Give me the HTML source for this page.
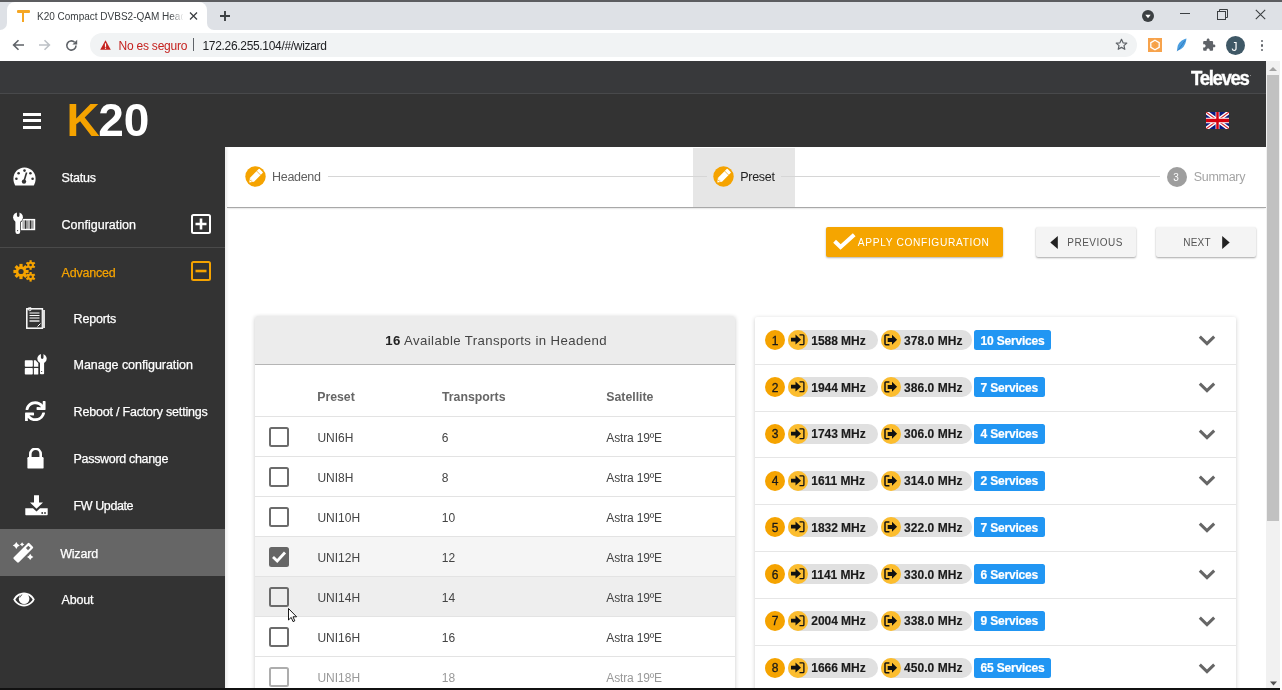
<!DOCTYPE html>
<html><head><meta charset="utf-8">
<style>
*{box-sizing:border-box;margin:0;padding:0}
html,body{width:1282px;height:690px;overflow:hidden;background:#fff;font-family:"Liberation Sans",sans-serif;position:relative}
.a{position:absolute}
.t{position:absolute;white-space:nowrap;line-height:1}
svg{display:block}
svg.a{position:absolute}
</style></head><body>
<div style="position:absolute;left:0;top:0;width:1282px;height:690px;will-change:transform">

<div class="a" style="left:0;top:0;width:1282px;height:2px;background:#5c5d60"></div>
<div class="a" style="left:0;top:2px;width:1282px;height:28px;background:#dee1e6"></div>
<div class="a" style="left:7px;top:2px;width:200px;height:28px;background:#fff;border-radius:8px 8px 0 0"></div>
<div class="a" style="left:-1px;top:22px;width:8px;height:8px;background:#fff"></div>
<div class="a" style="left:-1px;top:14px;width:8px;height:16px;background:#dee1e6;border-radius:0 0 7px 0"></div>
<div class="a" style="left:207px;top:22px;width:8px;height:8px;background:#fff"></div>
<div class="a" style="left:207px;top:14px;width:8px;height:16px;background:#dee1e6;border-radius:0 0 0 7px"></div>
<div class="a" style="left:0;top:30px;width:1282px;height:31px;background:#fff"></div>
<!-- favicon T -->
<div class="a" style="left:17px;top:10px;width:12.5px;height:2.6px;background:#f5a623;border-radius:1px"></div>
<div class="a" style="left:22px;top:11px;width:2.4px;height:11px;background:#f5a623"></div>
<div class="t" style="left:37.0px;top:12.00px;font-size:10px;color:#3c4043;font-weight:400;letter-spacing:0px;width:146px;overflow:hidden;">K20 Compact DVBS2-QAM Heade</div>
<div class="a" style="left:170px;top:8px;width:14px;height:16px;background:linear-gradient(90deg,rgba(255,255,255,0),#fff)"></div>
<svg class="a" style="left:189px;top:12px" width="9" height="8" viewBox="0 0 9 8"><path d="M1 0.5 L8 7.5 M8 0.5 L1 7.5" stroke="#3c4043" stroke-width="1.3"/></svg>
<svg class="a" style="left:219px;top:10px" width="12" height="12" viewBox="0 0 12 12"><path d="M6 1 V11 M1 6 H11" stroke="#3c4043" stroke-width="1.9"/></svg>
<svg class="a" style="left:12px;top:39px" width="13" height="12" viewBox="0 0 13 12"><path d="M12 6 H2 M6.5 1.2 L1.6 6 L6.5 10.8" fill="none" stroke="#5f6368" stroke-width="1.6"/></svg>
<svg class="a" style="left:38px;top:39px" width="13" height="12" viewBox="0 0 13 12"><path d="M1 6 H11 M6.5 1.2 L11.4 6 L6.5 10.8" fill="none" stroke="#bdc1c6" stroke-width="1.6"/></svg>
<svg class="a" style="left:65px;top:39px" width="13" height="13" viewBox="0 0 13 13"><path d="M11 6.5 A4.6 4.6 0 1 1 9.6 3.2" fill="none" stroke="#5f6368" stroke-width="1.6"/><path d="M12.2 0.8 V5.6 H7.4 Z" fill="#5f6368"/></svg>
<div class="a" style="left:90px;top:33px;width:1047px;height:24px;background:#f1f3f4;border-radius:12px"></div>
<svg class="a" style="left:100px;top:40px" width="11" height="10" viewBox="0 0 11 10"><path d="M5.5 0.3 L10.8 9.7 H0.2 Z" fill="#c5221f"/><rect x="4.9" y="3.3" width="1.2" height="3.6" fill="#fff"/><rect x="4.9" y="7.6" width="1.2" height="1.2" fill="#fff"/></svg>
<div class="t" style="left:118.5px;top:40.30px;font-size:12px;color:#c5221f;font-weight:400;letter-spacing:-0.22px;">No es seguro</div>
<div class="a" style="left:193px;top:38px;width:1px;height:13px;background:#5f6368"></div>
<div class="t" style="left:202.5px;top:40.30px;font-size:12px;color:#202124;font-weight:400;letter-spacing:-0.32px;">172.26.255.104/#/wizard</div>
<svg class="a" style="left:1115px;top:38px" width="13" height="13" viewBox="0 0 24 24"><path d="M12 2.5 L14.9 8.9 L21.8 9.5 L16.6 14.1 L18.1 20.9 L12 17.3 L5.9 20.9 L7.4 14.1 L2.2 9.5 L9.1 8.9 Z" fill="none" stroke="#5f6368" stroke-width="2.2" stroke-linejoin="round"/></svg>
<div class="a" style="left:1148px;top:38px;width:14px;height:14px;background:#f7a34c"></div>
<svg class="a" style="left:1148px;top:38px" width="14" height="14" viewBox="0 0 14 14"><path d="M7 2.2 L11.2 4.6 V9.4 L7 11.8 L2.8 9.4 V4.6 Z" fill="none" stroke="#fff" stroke-width="1.3"/><path d="M6 5 L8.2 7 L6.2 9" fill="none" stroke="#f39c3b" stroke-width="0.9"/></svg>
<svg class="a" style="left:1176px;top:38px" width="11" height="14" viewBox="0 0 11 14"><path d="M10.5 0.5 C6 1.5 2 5 1.5 9 L0.8 13.5 L2.5 12 C6 11.5 9.5 8 10.5 0.5 Z" fill="#4a9ee0"/><path d="M9 2.5 L2 12.5" stroke="#2a6fb0" stroke-width="0.7"/></svg>
<svg class="a" style="left:1202px;top:38px" width="14" height="14" viewBox="0 0 24 24"><path d="M20.5 11H19V7c0-1.1-.9-2-2-2h-4V3.5C13 2.12 11.88 1 10.5 1S8 2.12 8 3.5V5H4c-1.1 0-1.99.9-1.99 2v3.8H3.5c1.49 0 2.7 1.21 2.7 2.7s-1.21 2.7-2.7 2.7H2V20c0 1.1.9 2 2 2h3.8v-1.5c0-1.49 1.21-2.7 2.7-2.7 1.49 0 2.7 1.21 2.7 2.7V22H17c1.1 0 2-.9 2-2v-4h1.5c1.38 0 2.5-1.12 2.5-2.5S21.88 11 20.5 11z" fill="#5f6368"/></svg>
<div class="a" style="left:1226px;top:36px;width:19px;height:19px;border-radius:50%;background:#3f5866"></div>
<div class="t" style="left:1231.5px;top:41.20px;font-size:12px;color:#fff;font-weight:400;letter-spacing:0px;">J</div>
<div class="a" style="left:1260.5px;top:40px;width:2.4px;height:2.4px;border-radius:50%;background:#5f6368"></div>
<div class="a" style="left:1260.5px;top:44.3px;width:2.4px;height:2.4px;border-radius:50%;background:#5f6368"></div>
<div class="a" style="left:1260.5px;top:48.6px;width:2.4px;height:2.4px;border-radius:50%;background:#5f6368"></div>
<svg class="a" style="left:1142px;top:10px" width="12" height="12" viewBox="0 0 12 12"><circle cx="6" cy="6" r="6" fill="#3c4043"/><path d="M3.3 4.8 H8.7 L6 8.2 Z" fill="#fff"/></svg>
<div class="a" style="left:1180px;top:13px;width:10px;height:1px;background:#3c4043"></div>
<svg class="a" style="left:1217px;top:9px" width="11" height="11" viewBox="0 0 11 11"><rect x="0.5" y="2.5" width="8" height="8" fill="none" stroke="#3c4043" stroke-width="1"/><path d="M2.5 2.5 V0.5 H10.5 V8.5 H8.5" fill="none" stroke="#3c4043" stroke-width="1"/></svg>
<svg class="a" style="left:1255px;top:9px" width="11" height="11" viewBox="0 0 11 11"><path d="M0.8 0.8 L10.2 10.2 M10.2 0.8 L0.8 10.2" stroke="#3c4043" stroke-width="1.1"/></svg>

<div class="a" style="left:0;top:61px;width:1266px;height:32px;background:#38393b"></div>
<div class="a" style="left:0;top:93px;width:1266px;height:1px;background:#48494b"></div>
<div class="a" style="left:0;top:94px;width:1266px;height:53px;background:#333"></div>
<div class="a" style="left:0;top:147px;width:225px;height:541px;background:#333"></div>
<!-- hamburger -->
<div class="a" style="left:23px;top:112.5px;width:18px;height:3px;background:#fff"></div>
<div class="a" style="left:23px;top:119px;width:18px;height:3px;background:#fff"></div>
<div class="a" style="left:23px;top:125.5px;width:18px;height:3px;background:#fff"></div>
<div class="t" style="left:66.6px;top:97.40px;font-size:46px;color:#fff;font-weight:700;letter-spacing:0px;"><span style="color:#f5a300;letter-spacing:-1.5px">K</span><span style="letter-spacing:-0.2px">2</span>0</div>
<div class="t" style="left:1190.6px;top:67.50px;font-size:20px;color:#fff;font-weight:700;letter-spacing:-1.45px;transform:scaleX(0.93);transform-origin:left;-webkit-text-stroke:0.35px #fff;">Televes</div>
<div class="a" style="left:1249.5px;top:74.5px;width:1.8px;height:1.8px;border-radius:50%;background:#aaa"></div>
<svg class="a" style="left:1206px;top:112px" width="23" height="17" viewBox="0 0 60 30" preserveAspectRatio="none">
<rect width="60" height="30" fill="#0a1a80"/>
<path d="M0,0 L60,30 M60,0 L0,30" stroke="#fff" stroke-width="7.5"/>
<path d="M0,0 L60,30 M60,0 L0,30" stroke="#d4202a" stroke-width="2"/>
<path d="M30,0 V30 M0,15 H60" stroke="#fff" stroke-width="10"/>
<path d="M30,0 V30 M0,15 H60" stroke="#d40010" stroke-width="6.5"/>
</svg>
<div class="a" style="left:0;top:247px;width:225px;height:1px;background:#4a4a4a"></div>
<div class="a" style="left:0;top:529px;width:225px;height:47px;background:#666"></div>
<div class="t" style="left:61.6px;top:172.28px;font-size:12.5px;color:#fff;font-weight:400;letter-spacing:-0.2px;-webkit-text-stroke:0.25px #fff;">Status</div>
<div class="t" style="left:61.6px;top:219.08px;font-size:12.5px;color:#fff;font-weight:400;letter-spacing:0.0px;-webkit-text-stroke:0.25px #fff;">Configuration</div>
<div class="t" style="left:61.6px;top:266.57px;font-size:12.5px;color:#f5a300;font-weight:400;letter-spacing:-0.2px;-webkit-text-stroke:0.25px #f5a300;">Advanced</div>
<div class="t" style="left:73.6px;top:313.07px;font-size:12.5px;color:#fff;font-weight:400;letter-spacing:-0.2px;-webkit-text-stroke:0.25px #fff;">Reports</div>
<div class="t" style="left:73.6px;top:359.47px;font-size:12.5px;color:#fff;font-weight:400;letter-spacing:-0.05px;-webkit-text-stroke:0.25px #fff;">Manage configuration</div>
<div class="t" style="left:73.6px;top:406.27px;font-size:12.5px;color:#fff;font-weight:400;letter-spacing:-0.2px;-webkit-text-stroke:0.25px #fff;">Reboot / Factory settings</div>
<div class="t" style="left:73.6px;top:453.07px;font-size:12.5px;color:#fff;font-weight:400;letter-spacing:-0.33px;-webkit-text-stroke:0.25px #fff;">Password change</div>
<div class="t" style="left:73.6px;top:499.77px;font-size:12.5px;color:#fff;font-weight:400;letter-spacing:-0.42px;-webkit-text-stroke:0.25px #fff;">FW Update</div>
<div class="t" style="left:60.2px;top:547.67px;font-size:12.5px;color:#fff;font-weight:400;letter-spacing:-0.2px;-webkit-text-stroke:0.25px #fff;">Wizard</div>
<div class="t" style="left:61.6px;top:594.27px;font-size:12.5px;color:#fff;font-weight:400;letter-spacing:-0.2px;-webkit-text-stroke:0.25px #fff;">About</div>
<svg class="a" style="left:12.5px;top:167px" width="23" height="19" viewBox="0 0 23 19">
<path d="M11.5 0.6 C5.2 0.6 0.4 5.6 0.4 11.8 C0.4 14.2 1 16.4 2.2 18.4 H20.8 C22 16.4 22.6 14.2 22.6 11.8 C22.6 5.6 17.8 0.6 11.5 0.6 Z" fill="#fff"/>
<circle cx="11.5" cy="3.6" r="1.3" fill="#333"/><circle cx="5.6" cy="6.2" r="1.3" fill="#333"/><circle cx="17.4" cy="6.2" r="1.3" fill="#333"/>
<circle cx="3.4" cy="11.8" r="1.3" fill="#333"/><circle cx="19.6" cy="11.8" r="1.3" fill="#333"/>
<path d="M13.6 5.5 L11.3 13.3" stroke="#333" stroke-width="1.6"/><circle cx="11" cy="14.6" r="2.2" fill="#333"/>
</svg>
<svg class="a" style="left:8px;top:208px" width="32" height="30" viewBox="0 0 32 30">
<rect x="13" y="10.9" width="14.2" height="11.3" fill="#fff"/>
<rect x="14.5" y="12.4" width="11.2" height="8.3" fill="#9a9a9a"/>
<path d="M16 12.4 V20.7 M21 12.4 V20.7" stroke="#d0d0d0" stroke-width="1"/>
<path d="M17.5 12.4 V20.7 M22.5 12.4 V20.7" stroke="#333" stroke-width="1.1"/>
<circle cx="10" cy="9.3" r="5.6" fill="#333"/>
<rect x="6.9" y="11" width="5.8" height="15.6" rx="2.6" fill="#333"/>
<circle cx="10" cy="9.3" r="4.9" fill="#fff"/>
<rect x="7.4" y="11" width="4.8" height="15" rx="2.2" fill="#fff"/>
<path d="M8.9 3 V7.6 A1.3 1.3 0 0 0 11.5 7.6 V3 Z" fill="#333"/>
<circle cx="9.6" cy="22.6" r="0.6" fill="#333"/>
</svg>
<svg class="a" style="left:13px;top:260px" width="23" height="22" viewBox="0 0 23 22">
<g fill="#f5a300">
<circle cx="8" cy="11.5" r="5.2"/>
<g transform="translate(8 11.5)"><rect x="-1.6" y="-7.6" width="3.2" height="15.2"/><rect x="-1.6" y="-7.6" width="3.2" height="15.2" transform="rotate(45)"/><rect x="-1.6" y="-7.6" width="3.2" height="15.2" transform="rotate(90)"/><rect x="-1.6" y="-7.6" width="3.2" height="15.2" transform="rotate(135)"/></g>
<circle cx="17.6" cy="5" r="3.3"/>
<g transform="translate(17.6 5)"><rect x="-1.1" y="-4.8" width="2.2" height="9.6"/><rect x="-1.1" y="-4.8" width="2.2" height="9.6" transform="rotate(60)"/><rect x="-1.1" y="-4.8" width="2.2" height="9.6" transform="rotate(120)"/></g>
<circle cx="17.6" cy="16.8" r="3.3"/>
<g transform="translate(17.6 16.8)"><rect x="-1.1" y="-4.8" width="2.2" height="9.6"/><rect x="-1.1" y="-4.8" width="2.2" height="9.6" transform="rotate(60)"/><rect x="-1.1" y="-4.8" width="2.2" height="9.6" transform="rotate(120)"/></g>
</g>
<circle cx="8" cy="11.5" r="2.6" fill="#333"/><circle cx="17.6" cy="5" r="1.3" fill="#333"/><circle cx="17.6" cy="16.8" r="1.3" fill="#333"/>
</svg>
<svg class="a" style="left:191px;top:213.5px" width="20" height="20" viewBox="0 0 20 20"><rect x="1" y="1" width="18" height="18" rx="1.5" fill="none" stroke="#fff" stroke-width="2"/><path d="M10 4.5 V15.5 M4.5 10 H15.5" stroke="#fff" stroke-width="2.6"/></svg>
<svg class="a" style="left:191px;top:261px" width="20" height="20" viewBox="0 0 20 20"><rect x="1" y="1" width="18" height="18" rx="1.5" fill="none" stroke="#f5a300" stroke-width="2"/><path d="M4.5 10 H15.5" stroke="#f5a300" stroke-width="2.6"/></svg>
<svg class="a" style="left:26px;top:307px" width="20" height="22" viewBox="0 0 20 22">
<rect x="0.8" y="1.8" width="15.6" height="19.4" fill="none" stroke="#fff" stroke-width="1.5"/>
<rect x="16.4" y="3" width="2.6" height="18" fill="#ddd"/>
<path d="M3.5 6 H13.5 M3.5 8.5 H13.5 M3.5 11 H13.5" stroke="#fff" stroke-width="1"/>
<rect x="3.5" y="13" width="10" height="2" fill="#bbb"/>
<rect x="2.6" y="0.2" width="2.4" height="3.5" rx="1" fill="none" stroke="#fff" stroke-width="0.9"/>
<path d="M11.5 19.5 L14.5 16.5" stroke="#fff" stroke-width="1"/>
</svg>
<svg class="a" style="left:20px;top:350px" width="32" height="30" viewBox="0 0 32 30">
<g fill="#fff">
<rect x="4.8" y="10.2" width="8" height="6.6" rx="0.8"/><rect x="4.8" y="18" width="8" height="6.6" rx="0.8"/>
<path d="M13.9 10.2 H15.6 L18.3 13 V16.8 H13.9 Z"/><rect x="13.9" y="18" width="4.4" height="6.6" rx="0.6"/>
</g>
<circle cx="22" cy="8.7" r="5.5" fill="#333"/>
<rect x="19.5" y="11" width="5.1" height="14" rx="1" fill="#333"/>
<circle cx="22" cy="8.7" r="4.7" fill="#fff"/>
<rect x="20" y="11" width="4.1" height="13.3" rx="0.8" fill="#fff"/>
<path d="M20.9 3 V7.6 A1.3 1.3 0 0 0 23.5 7.6 V3 Z" fill="#333"/>
<rect x="21" y="21.2" width="1.2" height="0.8" fill="#333"/>
</svg>
<svg class="a" style="left:25.4px;top:400.8px" width="20.6" height="20.5" viewBox="0 0 512 512"><path fill="#fff" d="M440.65 12.57l4 82.77A247.16 247.16 0 0 0 255.83 8C134.73 8 33.91 94.92 12.29 209.82A12 12 0 0 0 24.09 224h49.05a12 12 0 0 0 11.67-9.26 175.91 175.91 0 0 1 317-56.94l-101.46-4.86a12 12 0 0 0-12.57 12v47.41a12 12 0 0 0 12 12H500a12 12 0 0 0 12-12V12a12 12 0 0 0-12-12h-47.37a12 12 0 0 0-11.98 12.57zM255.83 432a175.61 175.61 0 0 1-146-77.8l101.8 4.87a12 12 0 0 0 12.57-12v-47.4a12 12 0 0 0-12-12H12a12 12 0 0 0-12 12V500a12 12 0 0 0 12 12h47.35a12 12 0 0 0 12-12.6l-4.15-82.57A247.17 247.17 0 0 0 255.83 504c121.11 0 221.93-86.92 243.55-201.82a12 12 0 0 0-11.8-14.18h-49.05a12 12 0 0 0-11.67 9.26A175.86 175.86 0 0 1 255.83 432z"/></svg>
<svg class="a" style="left:27px;top:447.5px" width="17" height="21" viewBox="0 0 17 21"><path d="M3.3 9 V6 A5.2 5.2 0 0 1 13.7 6 V9" fill="none" stroke="#fff" stroke-width="2.6"/><rect x="0.4" y="9" width="16.2" height="11.6" rx="1.2" fill="#fff"/></svg>
<svg class="a" style="left:24.5px;top:494.5px" width="23" height="21" viewBox="0 0 23 21">
<path d="M9 0.3 H14 V7.5 H18 L11.5 13.8 L5 7.5 H9 Z" fill="#fff"/>
<path d="M0.3 13.3 H8 L11.5 16.6 L15 13.3 H22.7 V19.5 Q22.7 20.2 22 20.2 H1 Q0.3 20.2 0.3 19.5 Z" fill="#fff"/>
<circle cx="17.2" cy="18" r="0.9" fill="#333"/><circle cx="20" cy="18" r="0.9" fill="#333"/>
</svg>
<svg class="a" style="left:8px;top:538px" width="32" height="30" viewBox="0 0 32 30">
<g transform="translate(15.3 14.8) rotate(-45)"><rect x="-11.1" y="-3.6" width="22.2" height="7.2" rx="1.2" fill="#fff"/><rect x="5.2" y="-1.5" width="3.4" height="3" fill="#666"/></g>
<path d="M8.3 4.1 Q9.280000000000001 6.619999999999999 11.8 7.6 Q9.280000000000001 8.58 8.3 11.1 Q7.32 8.58 4.800000000000001 7.6 Q7.32 6.619999999999999 8.3 4.1 Z" fill="#fff"/>
<path d="M14.1 4.2 Q14.716 5.784000000000001 16.3 6.4 Q14.716 7.016 14.1 8.600000000000001 Q13.484 7.016 11.899999999999999 6.4 Q13.484 5.784000000000001 14.1 4.2 Z" fill="#fff"/>
<path d="M22.2 15.7 Q23.096 18.003999999999998 25.4 18.9 Q23.096 19.796 22.2 22.099999999999998 Q21.304 19.796 19.0 18.9 Q21.304 18.003999999999998 22.2 15.7 Z" fill="#fff"/>
</svg>
<svg class="a" style="left:13px;top:592px" width="22" height="15" viewBox="0 0 22 15">
<path d="M11 0.6 C5.6 0.6 1.6 4.4 0.4 7.5 C1.6 10.6 5.6 14.4 11 14.4 C16.4 14.4 20.4 10.6 21.6 7.5 C20.4 4.4 16.4 0.6 11 0.6 Z" fill="#fff"/>
<path d="M11 2.4 C7 2.4 3.6 5 2.4 7.5 C3.6 10 7 12.6 11 12.6 C15 12.6 18.4 10 19.6 7.5 C18.4 5 15 2.4 11 2.4 Z" fill="#333"/>
<circle cx="11.1" cy="6.8" r="5.3" fill="#fff"/>
<path d="M6.7 5.6 A4.4 4.4 0 0 1 9.2 2.7" fill="none" stroke="#555" stroke-width="1"/>
</svg>
<div class="a" style="left:225px;top:147px;width:1041px;height:541px;background:#fff"></div>
<div class="a" style="left:227px;top:147px;width:1039px;height:60px;background:#fff;box-shadow:0 2px 2px -1px rgba(0,0,0,.25)"></div>
<div class="a" style="left:227px;top:206.5px;width:1039px;height:1px;background:#a8a8a8"></div>
<div class="a" style="left:225px;top:147px;width:4px;height:541px;background:linear-gradient(90deg,rgba(0,0,0,.07),rgba(0,0,0,0))"></div>
<div class="a" style="left:693px;top:148px;width:102px;height:59px;background:#e6e6e6"></div>
<div class="a" style="left:328px;top:176px;width:379px;height:1px;background:#d6d6d6"></div>
<div class="a" style="left:781px;top:176px;width:379px;height:1px;background:#d6d6d6"></div>
<svg class="a" style="left:245px;top:166.2px" width="21" height="21" viewBox="0 0 21 21"><circle cx="10.5" cy="10.5" r="10.2" fill="#f5a300"/>
<g transform="translate(10.4 10.3) rotate(-45)"><rect x="-5.2" y="-2.8" width="13.4" height="5.6" rx="0.8" fill="#fff"/><path d="M-5 -2.8 L-8.6 0 L-5 2.8 Z" fill="#fff"/><path d="M4.6 -2.8 V2.8" stroke="#f5a300" stroke-width="0.7"/><path d="M-6.2 -1.3 V1.3" stroke="#f5a300" stroke-width="0.9"/></g></svg>
<svg class="a" style="left:713px;top:166.2px" width="21" height="21" viewBox="0 0 21 21"><circle cx="10.5" cy="10.5" r="10.2" fill="#f5a300"/>
<g transform="translate(10.4 10.3) rotate(-45)"><rect x="-5.2" y="-2.8" width="13.4" height="5.6" rx="0.8" fill="#fff"/><path d="M-5 -2.8 L-8.6 0 L-5 2.8 Z" fill="#fff"/><path d="M4.6 -2.8 V2.8" stroke="#f5a300" stroke-width="0.7"/><path d="M-6.2 -1.3 V1.3" stroke="#f5a300" stroke-width="0.9"/></g></svg>
<div class="a" style="left:1166.5px;top:166.8px;width:20px;height:20px;border-radius:50%;background:#9e9e9e"></div>
<div class="t" style="left:1173.2px;top:173.20px;font-size:10px;color:#fff;font-weight:400;letter-spacing:0px;">3</div>
<div class="t" style="left:272.0px;top:171.08px;font-size:12.5px;color:#5f5f5f;font-weight:400;letter-spacing:-0.3px;">Headend</div>
<div class="t" style="left:740.3px;top:171.08px;font-size:12.5px;color:#222;font-weight:400;letter-spacing:-0.3px;">Preset</div>
<div class="t" style="left:1193.8px;top:171.08px;font-size:12.5px;color:#a4a4a4;font-weight:400;letter-spacing:-0.3px;">Summary</div>
<div class="a" style="left:826px;top:227px;width:177px;height:30px;background:#f5a500;border-radius:2px;box-shadow:0 1px 2px rgba(0,0,0,.3)"></div>
<svg class="a" style="left:832.5px;top:233px" width="23" height="17" viewBox="0 0 23 17"><path d="M1.6 8.2 L7.6 14 L21.2 1.8" fill="none" stroke="#fff" stroke-width="4"/></svg>
<div class="t" style="left:857.8px;top:238.03px;font-size:10.2px;color:#fff;font-weight:400;letter-spacing:0.65px;">APPLY CONFIGURATION</div>
<div class="a" style="left:1036px;top:227px;width:100px;height:30px;background:#f4f4f4;border-radius:2px;box-shadow:0 1px 2px rgba(0,0,0,.35)"></div>
<div class="a" style="left:1156px;top:227px;width:100px;height:30px;background:#f4f4f4;border-radius:2px;box-shadow:0 1px 2px rgba(0,0,0,.35)"></div>
<svg class="a" style="left:1050px;top:235.5px" width="8" height="13" viewBox="0 0 8 13"><path d="M7.8 0 V13 L0.3 6.5 Z" fill="#222"/></svg>
<svg class="a" style="left:1222px;top:235.5px" width="8" height="13" viewBox="0 0 8 13"><path d="M0.2 0 V13 L7.7 6.5 Z" fill="#222"/></svg>
<div class="t" style="left:1067.3px;top:238.30px;font-size:10px;color:#555;font-weight:400;letter-spacing:0.5px;">PREVIOUS</div>
<div class="t" style="left:1183.3px;top:238.30px;font-size:10px;color:#555;font-weight:400;letter-spacing:0.2px;">NEXT</div>
<div class="a" style="left:255px;top:316px;width:480px;height:400px;background:#fff;border-radius:2px;box-shadow:0 1px 4px rgba(0,0,0,.22)"></div>
<div class="a" style="left:255px;top:316px;width:480px;height:49px;background:#ececec;border-radius:2px 2px 0 0;border-bottom:1px solid #b5b5b5"></div>
<div class="t" style="left:385.3px;top:333.88px;font-size:13.2px;color:#444;font-weight:400;letter-spacing:0.4px;"><b style="color:#222">16</b> Available Transports in Headend</div>
<div class="t" style="left:317.2px;top:391.44px;font-size:12.3px;color:#666;font-weight:700;letter-spacing:0px;">Preset</div>
<div class="t" style="left:442.0px;top:391.44px;font-size:12.3px;color:#666;font-weight:700;letter-spacing:0px;">Transports</div>
<div class="t" style="left:606.3px;top:391.44px;font-size:12.3px;color:#666;font-weight:700;letter-spacing:0px;">Satellite</div>
<div class="a" style="left:255px;top:416px;width:480px;height:40px;background:#fff;border-top:1px solid #e3e3e3"></div>
<div class="a" style="left:0;top:0;opacity:1"><div class="a" style="left:269px;top:427px;width:20px;height:20px;border:2px solid #6b6b6b;border-radius:2.5px"></div><div class="t" style="left:317.4px;top:431.90px;font-size:12px;color:#444;font-weight:400;letter-spacing:0px;">UNI6H</div>
<div class="t" style="left:441.8px;top:431.90px;font-size:12px;color:#444;font-weight:400;letter-spacing:0px;">6</div>
<div class="t" style="left:606.3px;top:431.90px;font-size:12px;color:#444;font-weight:400;letter-spacing:-0.15px;">Astra 19ºE</div>
</div>
<div class="a" style="left:255px;top:456px;width:480px;height:40px;background:#fff;border-top:1px solid #e3e3e3"></div>
<div class="a" style="left:0;top:0;opacity:1"><div class="a" style="left:269px;top:467px;width:20px;height:20px;border:2px solid #6b6b6b;border-radius:2.5px"></div><div class="t" style="left:317.4px;top:471.90px;font-size:12px;color:#444;font-weight:400;letter-spacing:0px;">UNI8H</div>
<div class="t" style="left:441.8px;top:471.90px;font-size:12px;color:#444;font-weight:400;letter-spacing:0px;">8</div>
<div class="t" style="left:606.3px;top:471.90px;font-size:12px;color:#444;font-weight:400;letter-spacing:-0.15px;">Astra 19ºE</div>
</div>
<div class="a" style="left:255px;top:496px;width:480px;height:40px;background:#fff;border-top:1px solid #e3e3e3"></div>
<div class="a" style="left:0;top:0;opacity:1"><div class="a" style="left:269px;top:507px;width:20px;height:20px;border:2px solid #6b6b6b;border-radius:2.5px"></div><div class="t" style="left:317.4px;top:511.90px;font-size:12px;color:#444;font-weight:400;letter-spacing:0px;">UNI10H</div>
<div class="t" style="left:441.8px;top:511.90px;font-size:12px;color:#444;font-weight:400;letter-spacing:0px;">10</div>
<div class="t" style="left:606.3px;top:511.90px;font-size:12px;color:#444;font-weight:400;letter-spacing:-0.15px;">Astra 19ºE</div>
</div>
<div class="a" style="left:255px;top:536px;width:480px;height:40px;background:#f5f5f5;border-top:1px solid #e3e3e3"></div>
<div class="a" style="left:0;top:0;opacity:1"><svg class="a" style="left:269px;top:547px" width="20" height="20" viewBox="0 0 20 20"><rect x="0" y="0" width="20" height="20" rx="2.5" fill="#666"/><path d="M4 10 L8.2 14 L16 5.5" fill="none" stroke="#fff" stroke-width="2.8"/></svg><div class="t" style="left:317.4px;top:551.90px;font-size:12px;color:#444;font-weight:400;letter-spacing:0px;">UNI12H</div>
<div class="t" style="left:441.8px;top:551.90px;font-size:12px;color:#444;font-weight:400;letter-spacing:0px;">12</div>
<div class="t" style="left:606.3px;top:551.90px;font-size:12px;color:#444;font-weight:400;letter-spacing:-0.15px;">Astra 19ºE</div>
</div>
<div class="a" style="left:255px;top:576px;width:480px;height:40px;background:#eeeeee;border-top:1px solid #e3e3e3"></div>
<div class="a" style="left:0;top:0;opacity:1"><div class="a" style="left:269px;top:587px;width:20px;height:20px;border:2px solid #6b6b6b;border-radius:2.5px"></div><div class="t" style="left:317.4px;top:591.90px;font-size:12px;color:#444;font-weight:400;letter-spacing:0px;">UNI14H</div>
<div class="t" style="left:441.8px;top:591.90px;font-size:12px;color:#444;font-weight:400;letter-spacing:0px;">14</div>
<div class="t" style="left:606.3px;top:591.90px;font-size:12px;color:#444;font-weight:400;letter-spacing:-0.15px;">Astra 19ºE</div>
</div>
<div class="a" style="left:255px;top:616px;width:480px;height:40px;background:#fff;border-top:1px solid #e3e3e3"></div>
<div class="a" style="left:0;top:0;opacity:1"><div class="a" style="left:269px;top:627px;width:20px;height:20px;border:2px solid #6b6b6b;border-radius:2.5px"></div><div class="t" style="left:317.4px;top:631.90px;font-size:12px;color:#444;font-weight:400;letter-spacing:0px;">UNI16H</div>
<div class="t" style="left:441.8px;top:631.90px;font-size:12px;color:#444;font-weight:400;letter-spacing:0px;">16</div>
<div class="t" style="left:606.3px;top:631.90px;font-size:12px;color:#444;font-weight:400;letter-spacing:-0.15px;">Astra 19ºE</div>
</div>
<div class="a" style="left:255px;top:656px;width:480px;height:40px;background:#fff;border-top:1px solid #e3e3e3"></div>
<div class="a" style="left:0;top:0;opacity:0.55"><div class="a" style="left:269px;top:667px;width:20px;height:20px;border:2px solid #6b6b6b;border-radius:2.5px"></div><div class="t" style="left:317.4px;top:671.90px;font-size:12px;color:#444;font-weight:400;letter-spacing:0px;">UNI18H</div>
<div class="t" style="left:441.8px;top:671.90px;font-size:12px;color:#444;font-weight:400;letter-spacing:0px;">18</div>
<div class="t" style="left:606.3px;top:671.90px;font-size:12px;color:#444;font-weight:400;letter-spacing:-0.15px;">Astra 19ºE</div>
</div>
<div class="a" style="left:755px;top:316.5px;width:481px;height:400px;background:#fff;border-radius:2px;box-shadow:0 1px 4px rgba(0,0,0,.2)"></div>
<div class="a" style="left:765px;top:330.3px;width:20px;height:20px;border-radius:50%;background:#f5a300"></div>
<div class="t" style="left:771.8px;top:334.80px;font-size:12px;color:#1a1a1a;font-weight:400;letter-spacing:0px;-webkit-text-stroke:0.3px #1a1a1a;">1</div>
<div class="a" style="left:788px;top:330.3px;width:90px;height:20px;border-radius:10px;background:#e0e0e0"></div>
<div class="a" style="left:788px;top:330.3px;width:20px;height:20px;border-radius:50%;background:#fcbd2e"></div>
<svg class="a" style="left:788px;top:330.3px" width="20" height="20" viewBox="0 0 20 20"><path d="M3 7.8 H8.5 V11.6 H3 Z M7.5 4.6 L13 9.7 L7.5 14.6 Z" fill="#111"/><path d="M11.5 4.9 H15 Q15.9 4.9 15.9 5.8 V13.8 Q15.9 14.7 15 14.7 H11.5" fill="none" stroke="#111" stroke-width="1.3"/></svg>
<div class="t" style="left:811.3px;top:334.80px;font-size:12px;color:#1a1a1a;font-weight:700;letter-spacing:-0.05px;-webkit-text-stroke:0.15px #1a1a1a;">1588 MHz</div>
<div class="a" style="left:881px;top:330.3px;width:90.5px;height:20px;border-radius:10px;background:#e0e0e0"></div>
<div class="a" style="left:881px;top:330.3px;width:20px;height:20px;border-radius:50%;background:#fcbd2e"></div>
<svg class="a" style="left:881px;top:330.3px" width="20" height="20" viewBox="0 0 20 20"><path d="M8.4 4.9 H4.9 Q4 4.9 4 5.8 V13.8 Q4 14.7 4.9 14.7 H8.4" fill="none" stroke="#111" stroke-width="1.5"/><path d="M6.7 8.1 H11.8 V11.9 H6.7 Z M11 4.8 L16.1 9.8 L11 14.8 Z" fill="#111"/></svg>
<div class="t" style="left:904.0px;top:334.80px;font-size:12px;color:#1a1a1a;font-weight:700;letter-spacing:0.05px;-webkit-text-stroke:0.15px #1a1a1a;">378.0 MHz</div>
<div class="a" style="left:974px;top:330.3px;width:77px;height:20px;border-radius:2.5px;background:#2196f3"></div>
<div class="t" style="left:980.6px;top:334.80px;font-size:12px;color:#fff;font-weight:700;letter-spacing:-0.2px;-webkit-text-stroke:0.2px #fff;">10 Services</div>
<svg class="a" style="left:1198px;top:335.1px" width="18" height="12" viewBox="0 0 18 12"><path d="M1.8 1.6 L9 8.6 L16.2 1.6" fill="none" stroke="#666" stroke-width="3"/></svg>
<div class="a" style="left:755px;top:363.9px;width:481px;height:1px;background:#e6e6e6"></div>
<div class="a" style="left:765px;top:377.1px;width:20px;height:20px;border-radius:50%;background:#f5a300"></div>
<div class="t" style="left:771.8px;top:381.58px;font-size:12px;color:#1a1a1a;font-weight:400;letter-spacing:0px;-webkit-text-stroke:0.3px #1a1a1a;">2</div>
<div class="a" style="left:788px;top:377.1px;width:90px;height:20px;border-radius:10px;background:#e0e0e0"></div>
<div class="a" style="left:788px;top:377.1px;width:20px;height:20px;border-radius:50%;background:#fcbd2e"></div>
<svg class="a" style="left:788px;top:377.1px" width="20" height="20" viewBox="0 0 20 20"><path d="M3 7.8 H8.5 V11.6 H3 Z M7.5 4.6 L13 9.7 L7.5 14.6 Z" fill="#111"/><path d="M11.5 4.9 H15 Q15.9 4.9 15.9 5.8 V13.8 Q15.9 14.7 15 14.7 H11.5" fill="none" stroke="#111" stroke-width="1.3"/></svg>
<div class="t" style="left:811.3px;top:381.58px;font-size:12px;color:#1a1a1a;font-weight:700;letter-spacing:-0.05px;-webkit-text-stroke:0.15px #1a1a1a;">1944 MHz</div>
<div class="a" style="left:881px;top:377.1px;width:90.5px;height:20px;border-radius:10px;background:#e0e0e0"></div>
<div class="a" style="left:881px;top:377.1px;width:20px;height:20px;border-radius:50%;background:#fcbd2e"></div>
<svg class="a" style="left:881px;top:377.1px" width="20" height="20" viewBox="0 0 20 20"><path d="M8.4 4.9 H4.9 Q4 4.9 4 5.8 V13.8 Q4 14.7 4.9 14.7 H8.4" fill="none" stroke="#111" stroke-width="1.5"/><path d="M6.7 8.1 H11.8 V11.9 H6.7 Z M11 4.8 L16.1 9.8 L11 14.8 Z" fill="#111"/></svg>
<div class="t" style="left:904.0px;top:381.58px;font-size:12px;color:#1a1a1a;font-weight:700;letter-spacing:0.05px;-webkit-text-stroke:0.15px #1a1a1a;">386.0 MHz</div>
<div class="a" style="left:974px;top:377.1px;width:71px;height:20px;border-radius:2.5px;background:#2196f3"></div>
<div class="t" style="left:980.6px;top:381.58px;font-size:12px;color:#fff;font-weight:700;letter-spacing:-0.2px;-webkit-text-stroke:0.2px #fff;">7 Services</div>
<svg class="a" style="left:1198px;top:381.9px" width="18" height="12" viewBox="0 0 18 12"><path d="M1.8 1.6 L9 8.6 L16.2 1.6" fill="none" stroke="#666" stroke-width="3"/></svg>
<div class="a" style="left:755px;top:410.7px;width:481px;height:1px;background:#e6e6e6"></div>
<div class="a" style="left:765px;top:423.9px;width:20px;height:20px;border-radius:50%;background:#f5a300"></div>
<div class="t" style="left:771.8px;top:428.36px;font-size:12px;color:#1a1a1a;font-weight:400;letter-spacing:0px;-webkit-text-stroke:0.3px #1a1a1a;">3</div>
<div class="a" style="left:788px;top:423.9px;width:90px;height:20px;border-radius:10px;background:#e0e0e0"></div>
<div class="a" style="left:788px;top:423.9px;width:20px;height:20px;border-radius:50%;background:#fcbd2e"></div>
<svg class="a" style="left:788px;top:423.9px" width="20" height="20" viewBox="0 0 20 20"><path d="M3 7.8 H8.5 V11.6 H3 Z M7.5 4.6 L13 9.7 L7.5 14.6 Z" fill="#111"/><path d="M11.5 4.9 H15 Q15.9 4.9 15.9 5.8 V13.8 Q15.9 14.7 15 14.7 H11.5" fill="none" stroke="#111" stroke-width="1.3"/></svg>
<div class="t" style="left:811.3px;top:428.36px;font-size:12px;color:#1a1a1a;font-weight:700;letter-spacing:-0.05px;-webkit-text-stroke:0.15px #1a1a1a;">1743 MHz</div>
<div class="a" style="left:881px;top:423.9px;width:90.5px;height:20px;border-radius:10px;background:#e0e0e0"></div>
<div class="a" style="left:881px;top:423.9px;width:20px;height:20px;border-radius:50%;background:#fcbd2e"></div>
<svg class="a" style="left:881px;top:423.9px" width="20" height="20" viewBox="0 0 20 20"><path d="M8.4 4.9 H4.9 Q4 4.9 4 5.8 V13.8 Q4 14.7 4.9 14.7 H8.4" fill="none" stroke="#111" stroke-width="1.5"/><path d="M6.7 8.1 H11.8 V11.9 H6.7 Z M11 4.8 L16.1 9.8 L11 14.8 Z" fill="#111"/></svg>
<div class="t" style="left:904.0px;top:428.36px;font-size:12px;color:#1a1a1a;font-weight:700;letter-spacing:0.05px;-webkit-text-stroke:0.15px #1a1a1a;">306.0 MHz</div>
<div class="a" style="left:974px;top:423.9px;width:71px;height:20px;border-radius:2.5px;background:#2196f3"></div>
<div class="t" style="left:980.6px;top:428.36px;font-size:12px;color:#fff;font-weight:700;letter-spacing:-0.2px;-webkit-text-stroke:0.2px #fff;">4 Services</div>
<svg class="a" style="left:1198px;top:428.7px" width="18" height="12" viewBox="0 0 18 12"><path d="M1.8 1.6 L9 8.6 L16.2 1.6" fill="none" stroke="#666" stroke-width="3"/></svg>
<div class="a" style="left:755px;top:457.4px;width:481px;height:1px;background:#e6e6e6"></div>
<div class="a" style="left:765px;top:470.6px;width:20px;height:20px;border-radius:50%;background:#f5a300"></div>
<div class="t" style="left:771.8px;top:475.14px;font-size:12px;color:#1a1a1a;font-weight:400;letter-spacing:0px;-webkit-text-stroke:0.3px #1a1a1a;">4</div>
<div class="a" style="left:788px;top:470.6px;width:90px;height:20px;border-radius:10px;background:#e0e0e0"></div>
<div class="a" style="left:788px;top:470.6px;width:20px;height:20px;border-radius:50%;background:#fcbd2e"></div>
<svg class="a" style="left:788px;top:470.6px" width="20" height="20" viewBox="0 0 20 20"><path d="M3 7.8 H8.5 V11.6 H3 Z M7.5 4.6 L13 9.7 L7.5 14.6 Z" fill="#111"/><path d="M11.5 4.9 H15 Q15.9 4.9 15.9 5.8 V13.8 Q15.9 14.7 15 14.7 H11.5" fill="none" stroke="#111" stroke-width="1.3"/></svg>
<div class="t" style="left:811.3px;top:475.14px;font-size:12px;color:#1a1a1a;font-weight:700;letter-spacing:-0.05px;-webkit-text-stroke:0.15px #1a1a1a;">1611 MHz</div>
<div class="a" style="left:881px;top:470.6px;width:90.5px;height:20px;border-radius:10px;background:#e0e0e0"></div>
<div class="a" style="left:881px;top:470.6px;width:20px;height:20px;border-radius:50%;background:#fcbd2e"></div>
<svg class="a" style="left:881px;top:470.6px" width="20" height="20" viewBox="0 0 20 20"><path d="M8.4 4.9 H4.9 Q4 4.9 4 5.8 V13.8 Q4 14.7 4.9 14.7 H8.4" fill="none" stroke="#111" stroke-width="1.5"/><path d="M6.7 8.1 H11.8 V11.9 H6.7 Z M11 4.8 L16.1 9.8 L11 14.8 Z" fill="#111"/></svg>
<div class="t" style="left:904.0px;top:475.14px;font-size:12px;color:#1a1a1a;font-weight:700;letter-spacing:0.05px;-webkit-text-stroke:0.15px #1a1a1a;">314.0 MHz</div>
<div class="a" style="left:974px;top:470.6px;width:71px;height:20px;border-radius:2.5px;background:#2196f3"></div>
<div class="t" style="left:980.6px;top:475.14px;font-size:12px;color:#fff;font-weight:700;letter-spacing:-0.2px;-webkit-text-stroke:0.2px #fff;">2 Services</div>
<svg class="a" style="left:1198px;top:475.4px" width="18" height="12" viewBox="0 0 18 12"><path d="M1.8 1.6 L9 8.6 L16.2 1.6" fill="none" stroke="#666" stroke-width="3"/></svg>
<div class="a" style="left:755px;top:504.2px;width:481px;height:1px;background:#e6e6e6"></div>
<div class="a" style="left:765px;top:517.4px;width:20px;height:20px;border-radius:50%;background:#f5a300"></div>
<div class="t" style="left:771.8px;top:521.92px;font-size:12px;color:#1a1a1a;font-weight:400;letter-spacing:0px;-webkit-text-stroke:0.3px #1a1a1a;">5</div>
<div class="a" style="left:788px;top:517.4px;width:90px;height:20px;border-radius:10px;background:#e0e0e0"></div>
<div class="a" style="left:788px;top:517.4px;width:20px;height:20px;border-radius:50%;background:#fcbd2e"></div>
<svg class="a" style="left:788px;top:517.4px" width="20" height="20" viewBox="0 0 20 20"><path d="M3 7.8 H8.5 V11.6 H3 Z M7.5 4.6 L13 9.7 L7.5 14.6 Z" fill="#111"/><path d="M11.5 4.9 H15 Q15.9 4.9 15.9 5.8 V13.8 Q15.9 14.7 15 14.7 H11.5" fill="none" stroke="#111" stroke-width="1.3"/></svg>
<div class="t" style="left:811.3px;top:521.92px;font-size:12px;color:#1a1a1a;font-weight:700;letter-spacing:-0.05px;-webkit-text-stroke:0.15px #1a1a1a;">1832 MHz</div>
<div class="a" style="left:881px;top:517.4px;width:90.5px;height:20px;border-radius:10px;background:#e0e0e0"></div>
<div class="a" style="left:881px;top:517.4px;width:20px;height:20px;border-radius:50%;background:#fcbd2e"></div>
<svg class="a" style="left:881px;top:517.4px" width="20" height="20" viewBox="0 0 20 20"><path d="M8.4 4.9 H4.9 Q4 4.9 4 5.8 V13.8 Q4 14.7 4.9 14.7 H8.4" fill="none" stroke="#111" stroke-width="1.5"/><path d="M6.7 8.1 H11.8 V11.9 H6.7 Z M11 4.8 L16.1 9.8 L11 14.8 Z" fill="#111"/></svg>
<div class="t" style="left:904.0px;top:521.92px;font-size:12px;color:#1a1a1a;font-weight:700;letter-spacing:0.05px;-webkit-text-stroke:0.15px #1a1a1a;">322.0 MHz</div>
<div class="a" style="left:974px;top:517.4px;width:71px;height:20px;border-radius:2.5px;background:#2196f3"></div>
<div class="t" style="left:980.6px;top:521.92px;font-size:12px;color:#fff;font-weight:700;letter-spacing:-0.2px;-webkit-text-stroke:0.2px #fff;">7 Services</div>
<svg class="a" style="left:1198px;top:522.2px" width="18" height="12" viewBox="0 0 18 12"><path d="M1.8 1.6 L9 8.6 L16.2 1.6" fill="none" stroke="#666" stroke-width="3"/></svg>
<div class="a" style="left:755px;top:551.0px;width:481px;height:1px;background:#e6e6e6"></div>
<div class="a" style="left:765px;top:564.2px;width:20px;height:20px;border-radius:50%;background:#f5a300"></div>
<div class="t" style="left:771.8px;top:568.70px;font-size:12px;color:#1a1a1a;font-weight:400;letter-spacing:0px;-webkit-text-stroke:0.3px #1a1a1a;">6</div>
<div class="a" style="left:788px;top:564.2px;width:90px;height:20px;border-radius:10px;background:#e0e0e0"></div>
<div class="a" style="left:788px;top:564.2px;width:20px;height:20px;border-radius:50%;background:#fcbd2e"></div>
<svg class="a" style="left:788px;top:564.2px" width="20" height="20" viewBox="0 0 20 20"><path d="M3 7.8 H8.5 V11.6 H3 Z M7.5 4.6 L13 9.7 L7.5 14.6 Z" fill="#111"/><path d="M11.5 4.9 H15 Q15.9 4.9 15.9 5.8 V13.8 Q15.9 14.7 15 14.7 H11.5" fill="none" stroke="#111" stroke-width="1.3"/></svg>
<div class="t" style="left:811.3px;top:568.70px;font-size:12px;color:#1a1a1a;font-weight:700;letter-spacing:-0.05px;-webkit-text-stroke:0.15px #1a1a1a;">1141 MHz</div>
<div class="a" style="left:881px;top:564.2px;width:90.5px;height:20px;border-radius:10px;background:#e0e0e0"></div>
<div class="a" style="left:881px;top:564.2px;width:20px;height:20px;border-radius:50%;background:#fcbd2e"></div>
<svg class="a" style="left:881px;top:564.2px" width="20" height="20" viewBox="0 0 20 20"><path d="M8.4 4.9 H4.9 Q4 4.9 4 5.8 V13.8 Q4 14.7 4.9 14.7 H8.4" fill="none" stroke="#111" stroke-width="1.5"/><path d="M6.7 8.1 H11.8 V11.9 H6.7 Z M11 4.8 L16.1 9.8 L11 14.8 Z" fill="#111"/></svg>
<div class="t" style="left:904.0px;top:568.70px;font-size:12px;color:#1a1a1a;font-weight:700;letter-spacing:0.05px;-webkit-text-stroke:0.15px #1a1a1a;">330.0 MHz</div>
<div class="a" style="left:974px;top:564.2px;width:71px;height:20px;border-radius:2.5px;background:#2196f3"></div>
<div class="t" style="left:980.6px;top:568.70px;font-size:12px;color:#fff;font-weight:700;letter-spacing:-0.2px;-webkit-text-stroke:0.2px #fff;">6 Services</div>
<svg class="a" style="left:1198px;top:569.0px" width="18" height="12" viewBox="0 0 18 12"><path d="M1.8 1.6 L9 8.6 L16.2 1.6" fill="none" stroke="#666" stroke-width="3"/></svg>
<div class="a" style="left:755px;top:597.8px;width:481px;height:1px;background:#e6e6e6"></div>
<div class="a" style="left:765px;top:611.0px;width:20px;height:20px;border-radius:50%;background:#f5a300"></div>
<div class="t" style="left:771.8px;top:615.48px;font-size:12px;color:#1a1a1a;font-weight:400;letter-spacing:0px;-webkit-text-stroke:0.3px #1a1a1a;">7</div>
<div class="a" style="left:788px;top:611.0px;width:90px;height:20px;border-radius:10px;background:#e0e0e0"></div>
<div class="a" style="left:788px;top:611.0px;width:20px;height:20px;border-radius:50%;background:#fcbd2e"></div>
<svg class="a" style="left:788px;top:611.0px" width="20" height="20" viewBox="0 0 20 20"><path d="M3 7.8 H8.5 V11.6 H3 Z M7.5 4.6 L13 9.7 L7.5 14.6 Z" fill="#111"/><path d="M11.5 4.9 H15 Q15.9 4.9 15.9 5.8 V13.8 Q15.9 14.7 15 14.7 H11.5" fill="none" stroke="#111" stroke-width="1.3"/></svg>
<div class="t" style="left:811.3px;top:615.48px;font-size:12px;color:#1a1a1a;font-weight:700;letter-spacing:-0.05px;-webkit-text-stroke:0.15px #1a1a1a;">2004 MHz</div>
<div class="a" style="left:881px;top:611.0px;width:90.5px;height:20px;border-radius:10px;background:#e0e0e0"></div>
<div class="a" style="left:881px;top:611.0px;width:20px;height:20px;border-radius:50%;background:#fcbd2e"></div>
<svg class="a" style="left:881px;top:611.0px" width="20" height="20" viewBox="0 0 20 20"><path d="M8.4 4.9 H4.9 Q4 4.9 4 5.8 V13.8 Q4 14.7 4.9 14.7 H8.4" fill="none" stroke="#111" stroke-width="1.5"/><path d="M6.7 8.1 H11.8 V11.9 H6.7 Z M11 4.8 L16.1 9.8 L11 14.8 Z" fill="#111"/></svg>
<div class="t" style="left:904.0px;top:615.48px;font-size:12px;color:#1a1a1a;font-weight:700;letter-spacing:0.05px;-webkit-text-stroke:0.15px #1a1a1a;">338.0 MHz</div>
<div class="a" style="left:974px;top:611.0px;width:71px;height:20px;border-radius:2.5px;background:#2196f3"></div>
<div class="t" style="left:980.6px;top:615.48px;font-size:12px;color:#fff;font-weight:700;letter-spacing:-0.2px;-webkit-text-stroke:0.2px #fff;">9 Services</div>
<svg class="a" style="left:1198px;top:615.8px" width="18" height="12" viewBox="0 0 18 12"><path d="M1.8 1.6 L9 8.6 L16.2 1.6" fill="none" stroke="#666" stroke-width="3"/></svg>
<div class="a" style="left:755px;top:644.6px;width:481px;height:1px;background:#e6e6e6"></div>
<div class="a" style="left:765px;top:657.8px;width:20px;height:20px;border-radius:50%;background:#f5a300"></div>
<div class="t" style="left:771.8px;top:662.26px;font-size:12px;color:#1a1a1a;font-weight:400;letter-spacing:0px;-webkit-text-stroke:0.3px #1a1a1a;">8</div>
<div class="a" style="left:788px;top:657.8px;width:90px;height:20px;border-radius:10px;background:#e0e0e0"></div>
<div class="a" style="left:788px;top:657.8px;width:20px;height:20px;border-radius:50%;background:#fcbd2e"></div>
<svg class="a" style="left:788px;top:657.8px" width="20" height="20" viewBox="0 0 20 20"><path d="M3 7.8 H8.5 V11.6 H3 Z M7.5 4.6 L13 9.7 L7.5 14.6 Z" fill="#111"/><path d="M11.5 4.9 H15 Q15.9 4.9 15.9 5.8 V13.8 Q15.9 14.7 15 14.7 H11.5" fill="none" stroke="#111" stroke-width="1.3"/></svg>
<div class="t" style="left:811.3px;top:662.26px;font-size:12px;color:#1a1a1a;font-weight:700;letter-spacing:-0.05px;-webkit-text-stroke:0.15px #1a1a1a;">1666 MHz</div>
<div class="a" style="left:881px;top:657.8px;width:90.5px;height:20px;border-radius:10px;background:#e0e0e0"></div>
<div class="a" style="left:881px;top:657.8px;width:20px;height:20px;border-radius:50%;background:#fcbd2e"></div>
<svg class="a" style="left:881px;top:657.8px" width="20" height="20" viewBox="0 0 20 20"><path d="M8.4 4.9 H4.9 Q4 4.9 4 5.8 V13.8 Q4 14.7 4.9 14.7 H8.4" fill="none" stroke="#111" stroke-width="1.5"/><path d="M6.7 8.1 H11.8 V11.9 H6.7 Z M11 4.8 L16.1 9.8 L11 14.8 Z" fill="#111"/></svg>
<div class="t" style="left:904.0px;top:662.26px;font-size:12px;color:#1a1a1a;font-weight:700;letter-spacing:0.05px;-webkit-text-stroke:0.15px #1a1a1a;">450.0 MHz</div>
<div class="a" style="left:974px;top:657.8px;width:77px;height:20px;border-radius:2.5px;background:#2196f3"></div>
<div class="t" style="left:980.6px;top:662.26px;font-size:12px;color:#fff;font-weight:700;letter-spacing:-0.2px;-webkit-text-stroke:0.2px #fff;">65 Services</div>
<svg class="a" style="left:1198px;top:662.6px" width="18" height="12" viewBox="0 0 18 12"><path d="M1.8 1.6 L9 8.6 L16.2 1.6" fill="none" stroke="#666" stroke-width="3"/></svg>
<svg class="a" style="left:288px;top:607.5px" width="10" height="15" viewBox="0 0 10 15"><path d="M0.5 0.5 V12 L3.2 9.4 L5 13.6 L6.8 12.8 L5 8.8 H8.6 Z" fill="#fff" stroke="#000" stroke-width="0.9" stroke-linejoin="round"/></svg>

<div class="a" style="left:1266px;top:61px;width:14px;height:627px;background:#f1f1f1"></div>
<svg class="a" style="left:1269px;top:66px" width="8" height="6" viewBox="0 0 8 6"><path d="M0 5 L4 1 L8 5 Z" fill="#a3a3a3"/></svg>
<div class="a" style="left:1267px;top:75px;width:12px;height:446px;background:#c1c1c1"></div>
<svg class="a" style="left:1270px;top:681px" width="7" height="5" viewBox="0 0 7 5"><path d="M0 0.5 L3.5 4.5 L7 0.5 Z" fill="#505050"/></svg>
<div class="a" style="left:1280px;top:30px;width:2px;height:660px;background:#fff"></div>
<div class="a" style="left:0;top:688px;width:1280px;height:2px;background:#111"></div>

</div>
</body></html>
